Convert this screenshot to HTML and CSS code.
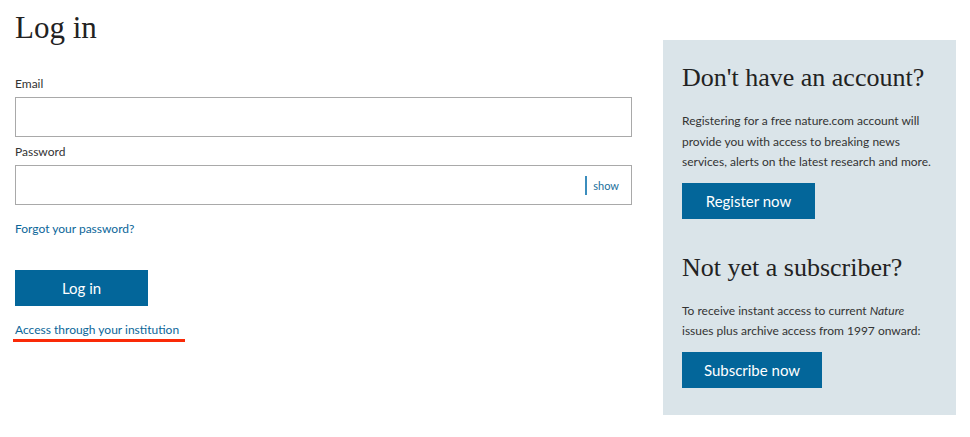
FILE: index.html
```html
<!DOCTYPE html>
<html lang="en">
<head>
<meta charset="utf-8">
<title>Log in</title>
<link rel="stylesheet" href="styles.css">
</head>
<body>
<div class="page">
  <main class="login">
    <h1 class="title">Log in</h1>
    <label class="label label-email" for="email">Email</label>
    <input class="field" id="email" type="email">
    <label class="label label-pass" for="pass">Password</label>
    <div class="field field-pass">
      <span class="show-sep"></span>
      <span class="show">show</span>
    </div>
    <a class="link forgot" href="#">Forgot your password?</a>
    <button class="btn btn-login">Log in</button>
    <a class="link institution" href="#">Access through your institution</a>
  </main>
  <aside class="panel">
    <h2 class="panel-title">Don't have an account?</h2>
    <p class="panel-text">Registering for a free nature.com account will provide you with access to breaking news services, alerts on the latest research and more.</p>
    <button class="btn btn-register">Register now</button>
    <h2 class="panel-title panel-title-2">Not yet a subscriber?</h2>
    <p class="panel-text">To receive instant access to current <em>Nature</em> issues plus archive access from 1997 onward:</p>
    <button class="btn btn-subscribe">Subscribe now</button>
  </aside>
</div>
</body>
</html>
```
FILE: styles.css
```css
* { box-sizing: border-box; }
body {
  margin: 0;
  background: #fff;
  font-family: "Lato", "Liberation Sans", sans-serif;
  color: #333;
}
.page {
  display: flex;
  align-items: flex-start;
  padding-left: 15px;
}
.login {
  width: 617px;
  display: flex;
  flex-direction: column;
  align-items: flex-start;
  padding-top: 10px;
}
.title {
  margin: 0;
  font-family: "Liberation Serif", serif;
  font-weight: 400;
  font-size: 31px;
  line-height: 36px;
  color: #222;
}
.label {
  font-size: 12px;
  line-height: 16px;
  color: #333;
}
.label-email { margin-top: 30px; }
.label-pass { margin-top: 7px; }
.field {
  margin-top: 5px;
  width: 617px;
  height: 40px;
  border: 1px solid #a9a9a9;
  background: #fff;
  font: inherit;
  outline: none;
}
.field-pass {
  display: flex;
  align-items: center;
  justify-content: flex-end;
  padding-right: 12px;
}
.show-sep {
  width: 2px;
  height: 19px;
  background: #3b8dbd;
  margin-right: 6px;
}
.show {
  font-size: 11px;
  color: #1a6f9c;
}
.link {
  font-size: 12px;
  line-height: 16px;
  color: #0b6699;
  text-decoration: none;
}
.forgot { margin-top: 16px; }
.btn {
  border: 0;
  background: #03669a;
  color: #fff;
  font-family: "Lato", "Liberation Sans", sans-serif;
  font-size: 15px;
  height: 36px;
  padding: 0;
  cursor: pointer;
}
.btn-login { margin-top: 33px; width: 133px; }
.institution {
  margin-top: 16px;
  position: relative;
}
.institution::after {
  content: "";
  position: absolute;
  left: -2px;
  right: -6px;
  bottom: -4px;
  height: 3px;
  background: #fa2a08;
}
.panel {
  margin-top: 40px;
  margin-left: 31px;
  width: 293px;
  height: 375px;
  background: #dae4e9;
  padding: 23px 19px 0;
  display: flex;
  flex-direction: column;
  align-items: flex-start;
}
.panel-title {
  margin: 0;
  font-family: "Liberation Serif", serif;
  font-weight: 400;
  font-size: 26px;
  line-height: 30px;
  color: #222;
  white-space: nowrap;
}
.panel-title-2 { margin-top: 34px; }
.panel-text {
  margin: 18px 0 0;
  font-size: 12px;
  line-height: 20.5px;
  color: #333;
  width: 252px;
}
.btn-register { margin-top: 10px; width: 133px; }
.btn-subscribe { margin-top: 10px; width: 140px; }
```
